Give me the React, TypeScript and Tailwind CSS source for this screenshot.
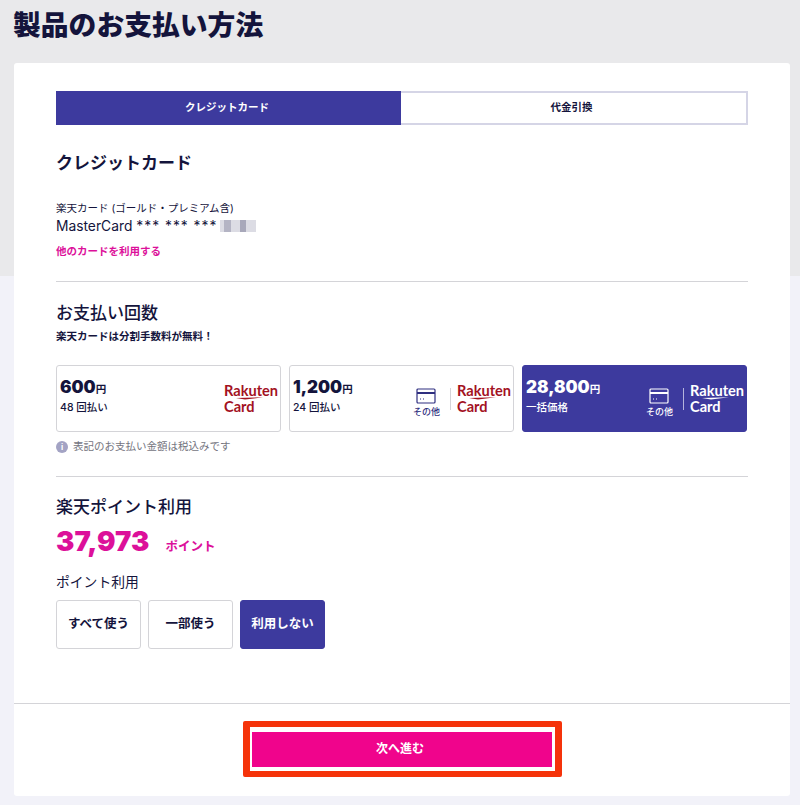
const JP = "font-['Inter','Noto_Sans_CJK_JP',sans-serif]";

function RakutenCard({ light }: { light?: boolean }) {
  const color = light ? "text-white" : "text-[#a3121f]";
  return (
    <div className={`relative flex w-[53px] flex-col font-['Lato','Noto_Sans_CJK_JP',sans-serif] text-[14.6px] leading-[16px] font-bold ${color}`}>
      <span>Rakuten</span>
      <span>Card</span>
      <svg className="absolute left-[12px] top-[14px]" width="27" height="3" viewBox="0 0 27 3">
        <path d="M0 1 L27 0.3 L9 2.6 Z" fill="currentColor" />
      </svg>
    </div>
  );
}

function Other({ light }: { light?: boolean }) {
  const color = light ? "text-white" : "text-[#2f2f80]";
  return (
    <div className={`mt-[8px] flex flex-col items-center ${color}`}>
      <svg width="20" height="16" viewBox="0 0 20 16" fill="none" stroke="currentColor" strokeWidth="1.2">
        <rect x="1" y="1" width="18" height="14" rx="1" />
        <path d="M1 5h18" strokeWidth="2" />
        <path d="M4 11h1M7 11h1" />
      </svg>
      <span className="mt-[2px] text-[9px] leading-[12px] font-medium">その他</span>
    </div>
  );
}

function Plan({ price, label, other, active }: { price: string; label: string; other?: boolean; active?: boolean }) {
  return (
    <div
      className={`flex h-[67px] w-[225px] items-center justify-between rounded-[3px] border pl-[3px] pr-[3px] ${
        active ? "border-[#3d3a9e] bg-[#3d3a9e] text-white" : "border-[#d4d4d8] bg-white text-[#14143c]"
      }`}
    >
      <div className="-mt-[6px] flex flex-col">
        <div className="flex items-baseline leading-[22px]">
          <span className="text-[17px] font-black">{price}</span>
          <span className="text-[10.5px] font-bold">円</span>
        </div>
        <span className="text-[10.5px] leading-[14px] font-medium">{label}</span>
      </div>
      <div className="flex items-center">
        {other && (
          <>
            <Other light={active} />
            <div className={`ml-[10px] mr-[6px] h-[22px] w-px ${active ? "bg-[#b5b4dc]" : "bg-[#d4d4d8]"}`} />
          </>
        )}
        <RakutenCard light={active} />
      </div>
    </div>
  );
}

function PointButton({ label, active }: { label: string; active?: boolean }) {
  return (
    <div
      className={`flex h-[49px] w-[85px] items-center justify-center rounded-[3px] border text-[12.5px] font-bold ${
        active ? "border-[#3d3a9e] bg-[#3d3a9e] text-white" : "border-[#d4d4d8] bg-white text-[#14143c]"
      }`}
    >
      {label}
    </div>
  );
}

export default function App() {
  return (
    <div className={`h-[805px] w-[800px] overflow-hidden bg-[linear-gradient(#e9e9eb_0,#e9e9eb_276px,#f2f2f9_276px)] text-[#14143c] ${JP}`}>
      <h1 className="pl-[13px] pt-[9px] text-[27.8px] leading-[32px] font-black">製品のお支払い方法</h1>

      <div className="ml-[14px] mt-[22px] h-[733px] w-[776px] rounded-[3px] bg-white">
        <div className="px-[42px] pt-[28px]">
          <div className="flex h-[34px] w-[692px] border-2 border-[#d5d5e6] text-[10.5px] font-bold">
            <div className="-m-[2px] mr-0 flex w-[345px] items-center justify-center bg-[#3d3a9e] pr-[3px] text-white">クレジットカード</div>
            <div className="flex flex-1 items-center justify-center pr-[4px]">代金引換</div>
          </div>

          <h2 className="mt-[27px] text-[17px] leading-[22px] font-bold">クレジットカード</h2>

          <p className="mt-[27px] text-[10.5px] leading-[16px]">楽天カード (ゴールド・プレミアム含)</p>
          <div className="flex h-[18px] items-center text-[13.8px] leading-[18px]">
            <span>MasterCard</span>
            <span className="ml-[4px] tracking-[1px]">*** *** ***</span>
            <div className="ml-[3px] flex h-[12px] w-[36px] bg-[#dcdce4]">
              <div className="ml-[4px] w-[7px] bg-[#b4b4c4]" />
              <div className="ml-[9px] w-[6px] bg-[#a8a8ba]" />
            </div>
          </div>
          <p className="mt-[10px] text-[10.5px] leading-[14px] font-bold text-[#dc109a]">他のカードを利用する</p>

          <div className="mt-[22px] h-px w-[692px] bg-[#d4d4d8]" />

          <h2 className="mt-[20px] text-[17px] leading-[22px] font-medium">お支払い回数</h2>
          <p className="mt-[6px] text-[10.5px] leading-[14px] font-bold">楽天カードは分割手数料が無料！</p>

          <div className="mt-[21px] flex gap-[8px]">
            <Plan price="600" label="48 回払い" />
            <Plan price="1,200" label="24 回払い" other />
            <Plan price="28,800" label="一括価格" other active />
          </div>

          <div className="mt-[8px] flex items-center text-[10.5px] leading-[14px] text-[#74747e]">
            <span className="mr-[5px] flex h-[12px] w-[12px] items-center justify-center rounded-full bg-[#a3a3c4] text-[8px] font-bold text-white">i</span>
            表記のお支払い金額は税込みです
          </div>

          <div className="mt-[22px] h-px w-[692px] bg-[#d4d4d8]" />

          <h2 className="mt-[19px] text-[17px] leading-[22px] font-medium">楽天ポイント利用</h2>
          <div className="mt-[6px] flex items-baseline text-[#dc109a]">
            <span className="text-[27.5px] leading-[34px] font-black">37,973</span>
            <span className="ml-[16px] text-[12.5px] font-bold">ポイント</span>
          </div>
          <p className="mt-[15px] text-[13.8px] leading-[18px]">ポイント利用</p>
          <div className="mt-[9px] flex gap-[7px]">
            <PointButton label="すべて使う" />
            <PointButton label="一部使う" />
            <PointButton label="利用しない" active />
          </div>
        </div>

        <div className="mt-[54px] flex h-[93px] items-start justify-center border-t border-[#d4d4d8] pt-[17px]">
          <div className="rounded-[2px] border-x-[7px] border-y-[6px] border-[#f5330a] px-[2.5px] py-[4.5px]">
            <div className="flex h-[35px] w-[300px] items-center justify-center bg-[#f0048c] pr-[4px] text-[12px] font-bold text-white">次へ進む</div>
          </div>
        </div>
      </div>
    </div>
  );
}
